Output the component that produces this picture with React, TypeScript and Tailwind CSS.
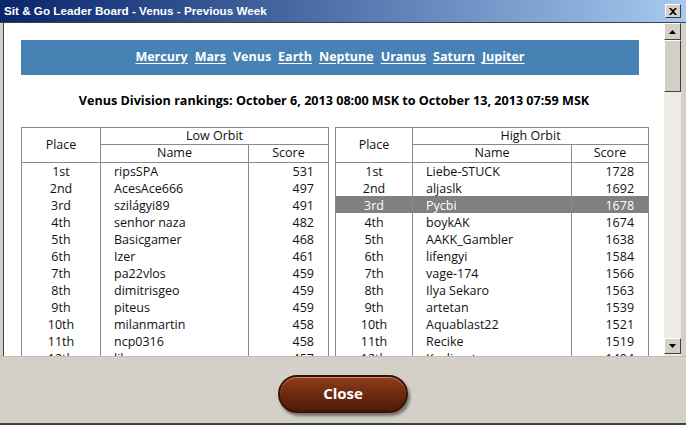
import React from 'react';

const low = [
  ['1st', 'ripsSPA', '531'],
  ['2nd', 'AcesAce666', '497'],
  ['3rd', 'szilágyi89', '491'],
  ['4th', 'senhor naza', '482'],
  ['5th', 'Basicgamer', '468'],
  ['6th', 'Izer', '461'],
  ['7th', 'pa22vlos', '459'],
  ['8th', 'dimitrisgeo', '459'],
  ['9th', 'piteus', '459'],
  ['10th', 'milanmartin', '458'],
  ['11th', 'ncp0316', '458'],
  ['12th', 'likeno', '457'],
];

const high = [
  ['1st', 'Liebe-STUCK', '1728'],
  ['2nd', 'aljaslk', '1692'],
  ['3rd', 'Pycbi', '1678'],
  ['4th', 'boykAK', '1674'],
  ['5th', 'AAKK_Gambler', '1638'],
  ['6th', 'lifengyi', '1584'],
  ['7th', 'vage-174', '1566'],
  ['8th', 'Ilya Sekaro', '1563'],
  ['9th', 'artetan', '1539'],
  ['10th', 'Aquablast22', '1521'],
  ['11th', 'Recike', '1519'],
  ['12th', 'Kavlimat', '1494'],
];

const planets = ['Mercury', 'Mars', 'Venus', 'Earth', 'Neptune', 'Uranus', 'Saturn', 'Jupiter'];

function Board({ title, rows, cols, highlight }: { title: string; rows: string[][]; cols: [number, number, number]; highlight?: number }) {
  return (
    <table className="table-fixed border-collapse text-[12.5px] text-[#111]" style={{ width: cols[0] + cols[1] + cols[2] }}>
      <colgroup>
        <col style={{ width: cols[0] }} />
        <col style={{ width: cols[1] }} />
        <col style={{ width: cols[2] }} />
      </colgroup>
      <thead>
        <tr className="h-[17px]">
          <th rowSpan={2} className="border border-[#8a8a8a] font-normal leading-none">Place</th>
          <th colSpan={2} className="border border-[#8a8a8a] font-normal leading-none">{title}</th>
        </tr>
        <tr className="h-[18px]">
          <th className="border border-[#8a8a8a] font-normal leading-none">Name</th>
          <th className="border border-[#8a8a8a] font-normal leading-none">Score</th>
        </tr>
      </thead>
      <tbody>
        {rows.map((r, i) => (
          <tr key={r[0]} className={i === highlight ? 'h-[17px] bg-[#808080] text-white' : 'h-[17px]'}>
            <td className="border-x border-[#8a8a8a] px-0 pb-0 pt-[2px] text-center leading-none">{r[0]}</td>
            <td className="border-x border-[#8a8a8a] pb-0 pl-[13px] pt-[2px] leading-none">{r[1]}</td>
            <td className="border-x border-[#8a8a8a] pb-0 pr-[14px] pt-[2px] text-right leading-none">{r[2]}</td>
          </tr>
        ))}
      </tbody>
    </table>
  );
}

export default function App() {
  return (
    <div className="relative h-[425px] w-[686px] overflow-hidden bg-[#d4d0c8] font-['Open_Sans',sans-serif]">
      <div className="flex h-[22px] items-center justify-between bg-gradient-to-r from-[#0a246a] to-[#a6caf0] pl-[4px] pr-[5px]">
        <span className="font-['Liberation_Sans',sans-serif] text-[11.7px] font-bold text-white">Sit &amp; Go Leader Board - Venus - Previous Week</span>
        <div className="flex h-[14px] w-[16px] items-center justify-center border border-b-[#404040] border-l-white border-r-[#404040] border-t-white bg-[#d4d0c8]">
          <svg width="8" height="7" viewBox="0 0 8 7">
            <path d="M0 0 L2 0 L4 2 L6 0 L8 0 L5 3.5 L8 7 L6 7 L4 5 L2 7 L0 7 L3 3.5 Z" fill="#000" />
          </svg>
        </div>
      </div>
      <div className="flex h-[334px] border-t border-[#404040] pl-[3px] pr-[5px]">
        <div className="w-[661px] overflow-hidden border-l border-[#404040] bg-white">
          <div className="ml-[17px] mt-[17px] flex h-[35px] w-[618px] items-center justify-center gap-[7px] bg-[#4682b4] text-[12.5px] font-bold text-white">
            {planets.map((p) => (
              <span key={p} className={p === 'Venus' ? '' : 'underline underline-offset-2'}>
                {p}
              </span>
            ))}
          </div>
          <div className="mt-[17px] text-center text-[12.6px] font-bold text-black">
            Venus Division rankings: October 6, 2013 08:00 MSK to October 13, 2013 07:59 MSK
          </div>
          <div className="ml-[17px] mt-[16px] flex gap-[6px]">
            <Board title="Low Orbit" rows={low} cols={[79, 148, 80]} />
            <Board title="High Orbit" rows={high} cols={[77, 159, 77]} highlight={2} />
          </div>
        </div>
        <div className="flex w-[17px] flex-col bg-[#ecebe6]">
          <div className="flex h-[17px] items-center justify-center border border-b-[#404040] border-l-white border-r-[#404040] border-t-white bg-[#d4d0c8]">
            <svg width="7" height="4" viewBox="0 0 7 4"><path d="M3.5 0 L7 4 L0 4 Z" fill="#000" /></svg>
          </div>
          <div className="h-[52px] border border-b-[#404040] border-l-white border-r-[#404040] border-t-white bg-[#d4d0c8]" />
          <div className="flex-1" />
          <div className="mb-[2px] flex h-[16px] items-center justify-center border border-b-[#404040] border-l-white border-r-[#404040] border-t-white bg-[#d4d0c8]">
            <svg width="7" height="4" viewBox="0 0 7 4"><path d="M0 0 L7 0 L3.5 4 Z" fill="#000" /></svg>
          </div>
        </div>
      </div>
      <div className="flex h-[66px] items-center justify-center border-t border-[#c0bdb5] pt-[8px]">
        <button className="flex h-[38px] w-[130px] items-center justify-center rounded-full border-2 border-[#3a1306] bg-gradient-to-b from-[#8f3e1c] via-[#6e2a10] to-[#4e1a08] text-[15px] font-bold text-white shadow-[2px_3px_3px_rgba(0,0,0,0.45),inset_0_1px_0_rgba(255,220,190,0.5)]">
          Close
        </button>
      </div>
      <div className="absolute bottom-0 left-0 h-[2px] w-full bg-[#404040]" />
    </div>
  );
}
